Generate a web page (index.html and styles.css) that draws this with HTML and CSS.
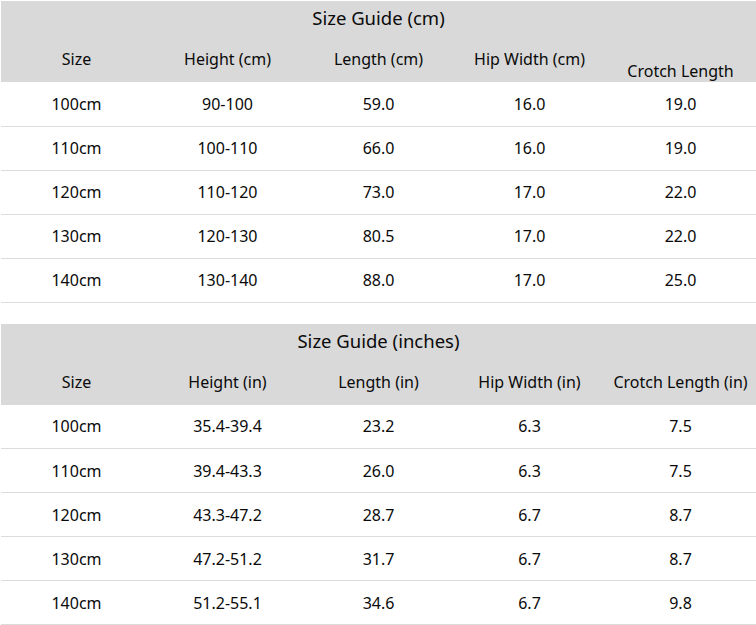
FILE: index.html
```html
<!DOCTYPE html>
<html>
<head>
<meta charset="utf-8">
<link rel="stylesheet" href="styles.css">
</head>
<body>
<div class="page">
  <table class="guide">
    <thead>
      <tr class="title-row"><th colspan="5">Size Guide (cm)</th></tr>
      <tr class="head-row">
        <th>Size</th><th>Height (cm)</th><th>Length (cm)</th><th>Hip Width (cm)</th><th class="low">Crotch Length</th>
      </tr>
    </thead>
    <tbody>
      <tr><td>100cm</td><td>90-100</td><td>59.0</td><td>16.0</td><td>19.0</td></tr>
      <tr><td>110cm</td><td>100-110</td><td>66.0</td><td>16.0</td><td>19.0</td></tr>
      <tr><td>120cm</td><td>110-120</td><td>73.0</td><td>17.0</td><td>22.0</td></tr>
      <tr><td>130cm</td><td>120-130</td><td>80.5</td><td>17.0</td><td>22.0</td></tr>
      <tr><td>140cm</td><td>130-140</td><td>88.0</td><td>17.0</td><td>25.0</td></tr>
    </tbody>
  </table>
  <table class="guide">
    <thead>
      <tr class="title-row"><th colspan="5">Size Guide (inches)</th></tr>
      <tr class="head-row">
        <th>Size</th><th>Height (in)</th><th>Length (in)</th><th>Hip Width (in)</th><th>Crotch Length (in)</th>
      </tr>
    </thead>
    <tbody>
      <tr><td>100cm</td><td>35.4-39.4</td><td>23.2</td><td>6.3</td><td>7.5</td></tr>
      <tr><td>110cm</td><td>39.4-43.3</td><td>26.0</td><td>6.3</td><td>7.5</td></tr>
      <tr><td>120cm</td><td>43.3-47.2</td><td>28.7</td><td>6.7</td><td>8.7</td></tr>
      <tr><td>130cm</td><td>47.2-51.2</td><td>31.7</td><td>6.7</td><td>8.7</td></tr>
      <tr><td>140cm</td><td>51.2-55.1</td><td>34.6</td><td>6.7</td><td>9.8</td></tr>
    </tbody>
  </table>
</div>
</body>
</html>
```
FILE: styles.css
```css
html, body {
  margin: 0;
  padding: 0;
  background: #fff;
}
.page {
  padding: 1px 0 0 1px;
  display: flex;
  flex-direction: column;
  gap: 21px;
  font-family: "Noto Sans", "Open Sans", sans-serif;
  color: #0a0a0a;
}
.guide {
  width: 755px;
  border-collapse: collapse;
  table-layout: fixed;
}
.guide th, .guide td {
  padding: 0;
  text-align: center;
  font-weight: normal;
  font-size: 16px;
}
.title-row th {
  background: #d9d9d9;
  height: 36px;
  font-size: 18.5px;
  vertical-align: middle;
  padding-bottom: 3px;
  box-sizing: border-box;
}
.head-row th {
  background: #d9d9d9;
  height: 45px;
  vertical-align: top;
  padding-top: 11px;
  box-sizing: border-box;
}
.head-row th.low {
  padding-top: 23px;
}
.guide td {
  height: 44px;
  border-bottom: 1px solid #dcdcdc;
  box-sizing: border-box;
  vertical-align: middle;
}
```
